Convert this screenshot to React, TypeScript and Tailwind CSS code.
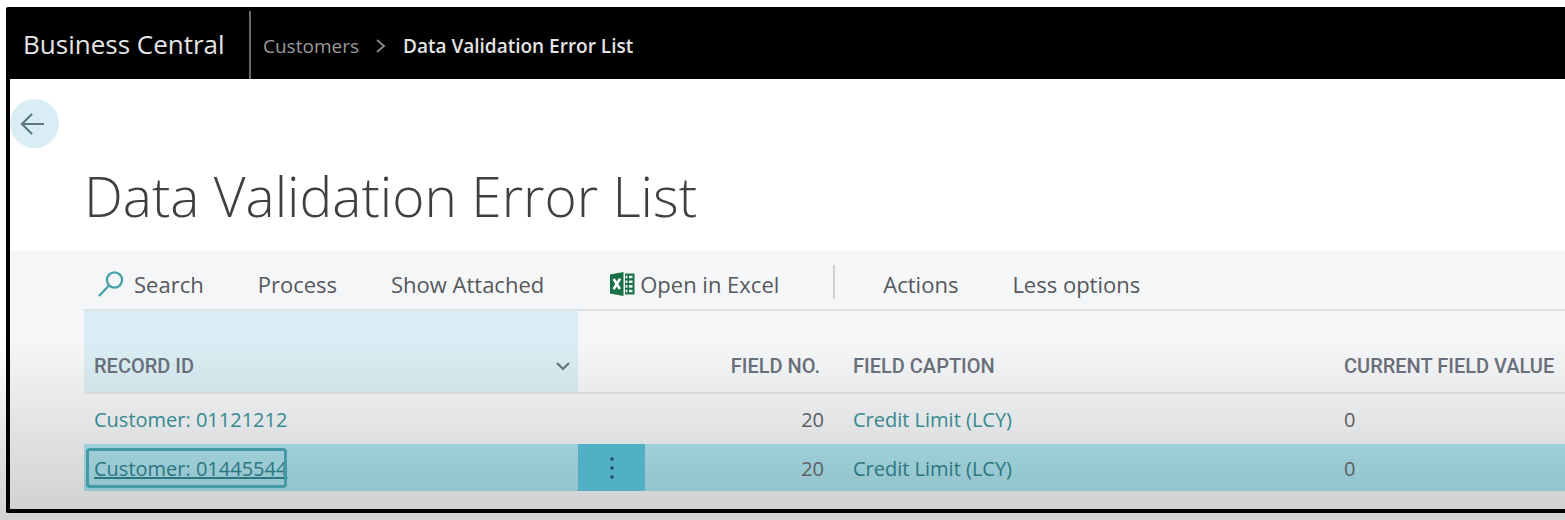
import React from 'react';
import clsx from 'clsx';

interface ErrorRow {
  recordId: string;
  fieldNo: number;
  caption: string;
  value: string;
  selected?: boolean;
}

const rows: ErrorRow[] = [
  { recordId: 'Customer: 01121212', fieldNo: 20, caption: 'Credit Limit (LCY)', value: '0' },
  { recordId: 'Customer: 01445544', fieldNo: 20, caption: 'Credit Limit (LCY)', value: '0', selected: true },
];

function SearchIcon() {
  return (
    <svg width="26" height="26" viewBox="0 0 26 26" fill="none" stroke="#4ba3a9" strokeWidth="2.4" aria-hidden="true">
      <circle cx="16.5" cy="9" r="7.6" />
      <path d="M11 14.5 1 25" />
    </svg>
  );
}

function ExcelIcon() {
  return (
    <svg width="26" height="24" viewBox="0 0 26 24" aria-hidden="true">
      <path d="M0 2.5 13.5 0v24L0 21.5Z" fill="#1c7048" />
      <path d="M15 1.5h9.5v21H15Z" fill="#1c7048" />
      <path d="M15.5 5h2M15.5 9.7h2M15.5 14.4h2M15.5 19h2M19 5h3.5M19 9.7h3.5M19 14.4h3.5M19 19h3.5" stroke="#e4efe9" strokeWidth="2.6" />
      <path d="m3.7 7 6.2 10M10.1 6.6 3.6 17.2" stroke="#fff" strokeWidth="2.6" />
    </svg>
  );
}

function TopBar() {
  return (
    <header className="flex h-[72px] items-stretch bg-black pt-1 text-white">
      <a href="#" className="flex w-[241px] items-center border-r-2 border-[#6b6b6b] pb-0.5 pl-[13px] text-[26px] whitespace-nowrap text-[#e4e4e4]">
        Business Central
      </a>
      <nav aria-label="Breadcrumb" className="flex items-center gap-4 pt-0.5 pl-3 text-[19px] whitespace-nowrap">
        <a href="#" className="text-[#9a9a9a]">Customers</a>
        <svg width="12" height="14" viewBox="0 0 12 14" fill="none" stroke="#858585" strokeWidth="2" aria-hidden="true">
          <path d="m2 1 7 6-7 6" />
        </svg>
        <span className="font-semibold text-[#e4e4e4]">Data Validation Error List</span>
      </nav>
    </header>
  );
}

function ActionBar() {
  return (
    <div className="ml-[74px] flex h-[60px] items-center gap-[54px] border-b-2 border-[#dfe2e4] pt-2 pl-[14px] text-[22px] whitespace-nowrap text-[#55585c]">
      <button type="button" className="flex items-center gap-[10px]">
        <SearchIcon />
        Search
      </button>
      <button type="button">Process</button>
      <button type="button">Show Attached</button>
      <button type="button" className="ml-3 flex items-center gap-1">
        <ExcelIcon />
        Open in Excel
      </button>
      <div className="flex items-center gap-12">
        <div className="mb-1 h-[34px] w-[2px] bg-[#cdd0d3]" />
        <button type="button">Actions</button>
      </div>
      <button type="button">Less options</button>
    </div>
  );
}

function ErrorTable() {
  return (
    <table className="ml-[74px] w-[calc(100%-74px)] table-fixed border-collapse text-left whitespace-nowrap">
      <colgroup>
        <col className="w-[494px]" />
        <col className="w-[67px]" />
        <col className="w-[193px]" />
        <col className="w-[491px]" />
        <col />
      </colgroup>
      <thead>
        <tr className="h-[82px] border-b-2 border-[#d6dadc] align-bottom font-[Roboto] text-[20px] leading-6 text-[#696e79]">
          <th scope="col" className="bg-linear-to-b from-[#d9edf4] from-40% to-[#d0e3e8] pb-[14px] pl-[10px] font-medium">
            <button type="button" className="flex w-full items-center justify-between pr-2">
              RECORD ID
              <svg width="14" height="9" viewBox="0 0 14 9" fill="none" stroke="#66757c" strokeWidth="2.2" aria-hidden="true">
                <path d="m1 1 6 6 6-6" />
              </svg>
            </button>
          </th>
          <td />
          <th scope="col" className="pr-[18px] pb-[14px] text-right font-medium">FIELD NO.</th>
          <th scope="col" className="pb-[14px] pl-[15px] font-medium">FIELD CAPTION</th>
          <th scope="col" className="pb-[14px] pl-[15px] font-medium">CURRENT FIELD VALUE</th>
        </tr>
      </thead>
      <tbody className="text-[20px] text-[#5b5e62]">
        {rows.map((row) => (
          <tr
            key={row.recordId}
            className={clsx(row.selected ? 'h-[47px] bg-linear-to-b from-[#9fd0db] to-[#93c3cb]' : 'h-[51px]')}
          >
            <td className={clsx(row.selected ? 'pl-[2px]' : 'pt-0.5 pl-[10px]')}>
              <a
                href="#"
                className={clsx(
                  row.selected
                    ? 'inline-block rounded-sm pt-[6px] pb-1 pl-2 text-[#2b7680] underline outline-3 -outline-offset-3 outline-[#439aa6]'
                    : 'text-[#35898f]'
                )}
              >
                {row.recordId}
              </a>
            </td>
            <td className="p-0">
              {row.selected && (
                <button type="button" aria-label="Row options" className="flex h-[47px] w-full items-center justify-center bg-[#52b0c6]">
                  <svg width="4" height="22" viewBox="0 0 4 22" fill="#1f4f5e" aria-hidden="true">
                    <circle cx="2" cy="2" r="1.8" />
                    <circle cx="2" cy="11" r="1.8" />
                    <circle cx="2" cy="20" r="1.8" />
                  </svg>
                </button>
              )}
            </td>
            <td className="pt-0.5 pr-[14px] text-right">{row.fieldNo}</td>
            <td className="pt-0.5 pl-[15px]">
              <a href="#" className={clsx(row.selected ? 'text-[#2b7680]' : 'text-[#35898f]')}>{row.caption}</a>
            </td>
            <td className="pt-0.5 pl-[15px]">{row.value}</td>
          </tr>
        ))}
      </tbody>
    </table>
  );
}

export default function App() {
  return (
    <div className="min-h-screen overflow-x-hidden bg-linear-to-b from-white from-65% to-[#d3d3d3] to-98% pt-[7px] pb-[6px] pl-[6px] font-['Open_Sans',sans-serif]">
      <div className="rounded-l-xs border-b-4 border-l-4 border-black bg-white">
        <TopBar />
        <main>
          <div className="pt-5">
            <button type="button" aria-label="Back" className="flex size-[49px] items-center rounded-full bg-[#d9edf4] pl-[10px]">
              <svg width="25" height="22" viewBox="0 0 25 22" fill="none" stroke="#5f7982" strokeWidth="2.2" aria-hidden="true">
                <path d="M24 11H2M12 1 2 11l10 10" />
              </svg>
            </button>
            <h1 className="h-[103px] pt-2 pl-[74px] text-[55px] leading-[80px] font-light whitespace-nowrap text-[#3f3f3f]">
              Data Validation Error List
            </h1>
          </div>
          <section className="bg-linear-to-b from-[#f5f6f8] from-35% via-[#e7e8ea] via-60% to-[#d1d2d3] pb-[18px]">
            <ActionBar />
            <ErrorTable />
          </section>
        </main>
      </div>
    </div>
  );
}
